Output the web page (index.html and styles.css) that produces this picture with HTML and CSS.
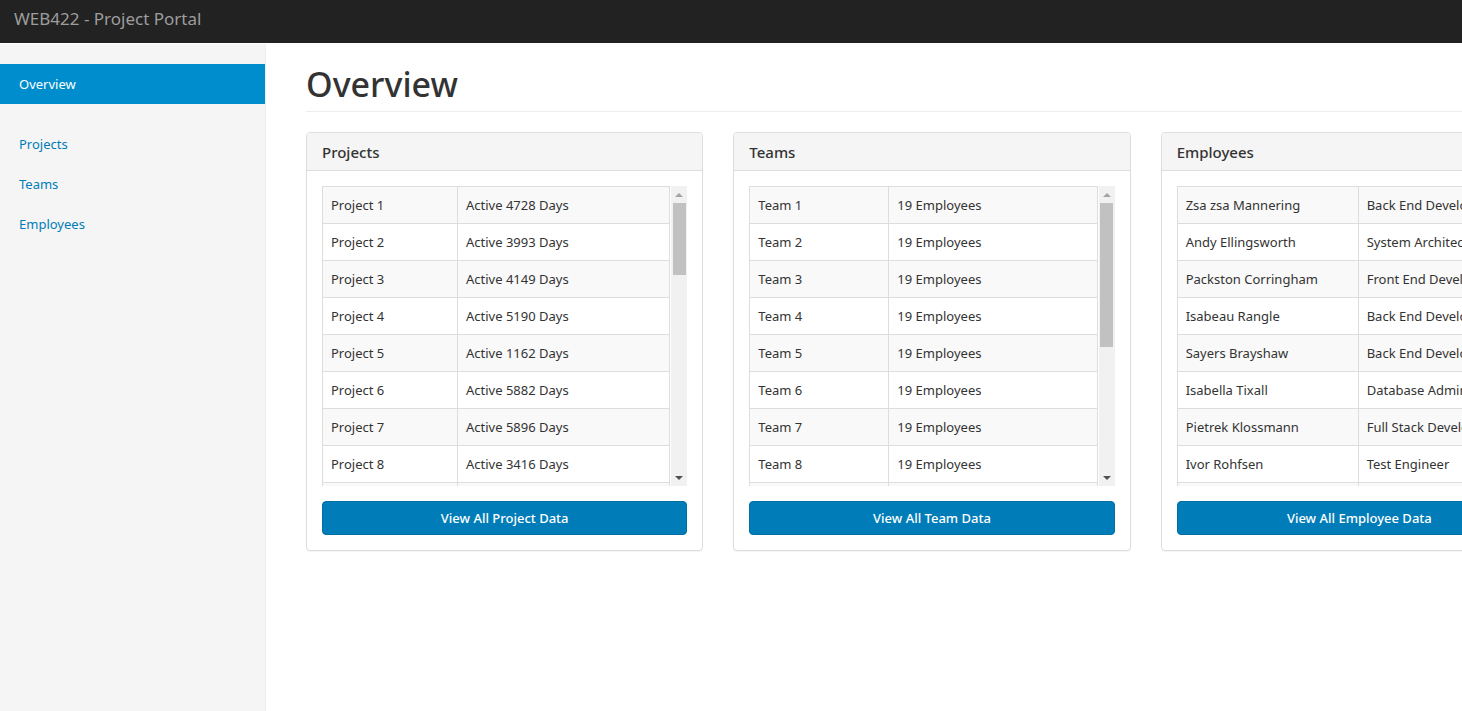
FILE: index.html
```html
<!DOCTYPE html>
<html lang="en">
<head>
<meta charset="utf-8">
<title>WEB422 - Project Portal</title>
<link rel="stylesheet" href="styles.css">
</head>
<body>
<header class="navbar"><a class="brand" href="#">WEB422 - Project Portal</a></header>
<div class="layout">
  <nav class="sidebar" aria-label="Main">
    <ul class="nav-list"><li><a class="nav-link active" href="#overview" aria-current="page">Overview</a></li></ul>
    <ul class="nav-list">
      <li><a class="nav-link" href="#projects">Projects</a></li>
      <li><a class="nav-link" href="#teams">Teams</a></li>
      <li><a class="nav-link" href="#employees">Employees</a></li>
    </ul>
  </nav>
  <main class="main">
    <h1 class="page-header">Overview</h1>
    <div class="panels">
      <section class="panel">
        <h2 class="panel-heading">Projects</h2>
        <div class="panel-body">
          <div class="scroller">
            <div class="viewport">
              <table class="table projects">
                <tr><td>Project 1</td><td>Active 4728 Days</td></tr>
                <tr><td>Project 2</td><td>Active 3993 Days</td></tr>
                <tr><td>Project 3</td><td>Active 4149 Days</td></tr>
                <tr><td>Project 4</td><td>Active 5190 Days</td></tr>
                <tr><td>Project 5</td><td>Active 1162 Days</td></tr>
                <tr><td>Project 6</td><td>Active 5882 Days</td></tr>
                <tr><td>Project 7</td><td>Active 5896 Days</td></tr>
                <tr><td>Project 8</td><td>Active 3416 Days</td></tr>
                <tr><td></td><td></td></tr>
              </table>
            </div>
            <div class="scrollbar" aria-hidden="true"><span class="arrow up"></span><span class="thumb short"></span><span class="arrow down"></span></div>
          </div>
          <button class="btn" type="button">View All Project Data</button>
        </div>
      </section>
      <section class="panel">
        <h2 class="panel-heading">Teams</h2>
        <div class="panel-body">
          <div class="scroller">
            <div class="viewport">
              <table class="table teams">
                <tr><td>Team 1</td><td>19 Employees</td></tr>
                <tr><td>Team 2</td><td>19 Employees</td></tr>
                <tr><td>Team 3</td><td>19 Employees</td></tr>
                <tr><td>Team 4</td><td>19 Employees</td></tr>
                <tr><td>Team 5</td><td>19 Employees</td></tr>
                <tr><td>Team 6</td><td>19 Employees</td></tr>
                <tr><td>Team 7</td><td>19 Employees</td></tr>
                <tr><td>Team 8</td><td>19 Employees</td></tr>
                <tr><td></td><td></td></tr>
              </table>
            </div>
            <div class="scrollbar" aria-hidden="true"><span class="arrow up"></span><span class="thumb long"></span><span class="arrow down"></span></div>
          </div>
          <button class="btn" type="button">View All Team Data</button>
        </div>
      </section>
      <section class="panel">
        <h2 class="panel-heading">Employees</h2>
        <div class="panel-body">
          <div class="scroller">
            <div class="viewport">
              <table class="table employees">
                <tr><td>Zsa zsa Mannering</td><td>Back End Developer</td></tr>
                <tr><td>Andy Ellingsworth</td><td>System Architect</td></tr>
                <tr><td>Packston Corringham</td><td>Front End Developer</td></tr>
                <tr><td>Isabeau Rangle</td><td>Back End Developer</td></tr>
                <tr><td>Sayers Brayshaw</td><td>Back End Developer</td></tr>
                <tr><td>Isabella Tixall</td><td>Database Administrator</td></tr>
                <tr><td>Pietrek Klossmann</td><td>Full Stack Developer</td></tr>
                <tr><td>Ivor Rohfsen</td><td>Test Engineer</td></tr>
                <tr><td></td><td></td></tr>
              </table>
            </div>
            <div class="scrollbar" aria-hidden="true"><span class="arrow up"></span><span class="thumb short"></span><span class="arrow down"></span></div>
          </div>
          <button class="btn" type="button">View All Employee Data</button>
        </div>
      </section>
    </div>
  </main>
</div>
</body>
</html>
```
FILE: styles.css
```css
* { box-sizing: border-box; }
body {
  display: flex;
  flex-direction: column;
  min-height: 100vh;
  margin: 0;
  overflow-x: hidden;
  background: #fff;
  color: #333;
  font: 14px/20px "Segoe UI", "Noto Sans", "Open Sans", sans-serif;
}
.navbar {
  padding: 9px 14px 14px;
  margin-bottom: 1px;
  background: #222;
}
.brand {
  display: block;
  color: #9d9d9d;
  font-size: 17px;
  line-height: 20px;
  text-decoration: none;
}
.layout { display: flex; flex: 1; }
.sidebar {
  flex: 0 0 266px;
  padding-top: 20px;
  background: #f5f5f5;
  border-right: 1px solid #eee;
}
.nav-list { margin: 0 0 20px; padding: 0; list-style: none; }
.nav-link {
  display: block;
  padding: 10px 19px;
  color: #007db8;
  font-size: 13px;
  text-decoration: none;
}
.nav-link.active { background: #008dcd; color: #fff; }
.main { flex: 1; min-width: 0; padding: 20px 40px 20px; overflow: hidden; }
.page-header {
  min-width: 1252px;
  margin: 0 0 20px;
  padding-bottom: 7px;
  border-bottom: 1px solid #eee;
  font-size: 34px;
  font-weight: 550;
  line-height: 40px;
}
.panels {
  display: grid;
  grid-template-columns: repeat(3, minmax(397px, 1fr));
  gap: 30px;
  min-width: 1252px;
}
.panel {
  border: 1px solid #ddd;
  border-radius: 4px;
  box-shadow: 0 1px 1px rgba(0, 0, 0, .05);
}
.panel-heading {
  margin: 0;
  padding: 11px 15px 9px;
  background: #f5f5f5;
  border-bottom: 1px solid #ddd;
  border-radius: 3px 3px 0 0;
  font-size: 15px;
  font-weight: 500;
  line-height: 17px;
}
.panel-body { padding: 15px; }
.scroller { display: flex; gap: 1px; height: 300px; margin-bottom: 15px; }
.viewport { flex: 1; overflow: hidden; }
.table {
  width: 100%;
  table-layout: fixed;
  border-collapse: collapse;
  font-size: 13px;
}
.table td { height: 37px; padding: 8px; border: 1px solid #ddd; white-space: nowrap; }
.table tr:nth-child(odd) { background: #f9f9f9; }
.projects td:first-child { width: 135px; }
.teams td:first-child { width: 139px; }
.employees td:first-child { width: 181px; }
.scrollbar {
  display: flex;
  flex: 0 0 16px;
  flex-direction: column;
  align-items: center;
  background: #f1f1f1;
}
.thumb { width: 13px; background: #c1c1c1; }
.thumb.short { height: 72px; }
.thumb.long { height: 144px; }
.arrow { display: flex; align-items: center; justify-content: center; height: 17px; }
.arrow::before { content: ""; border: 4px solid transparent; }
.up::before { border-top: 0; border-bottom-color: #a3a3a3; }
.down { margin-top: auto; }
.down::before { border-bottom: 0; border-top-color: #505050; }
.btn {
  display: block;
  width: 100%;
  padding: 6px 12px;
  background: #007db8;
  border: 1px solid #006fa3;
  border-radius: 4px;
  color: #fff;
  font: inherit;
  font-size: 13px;
  font-weight: 500;
  line-height: 20px;
}
```
